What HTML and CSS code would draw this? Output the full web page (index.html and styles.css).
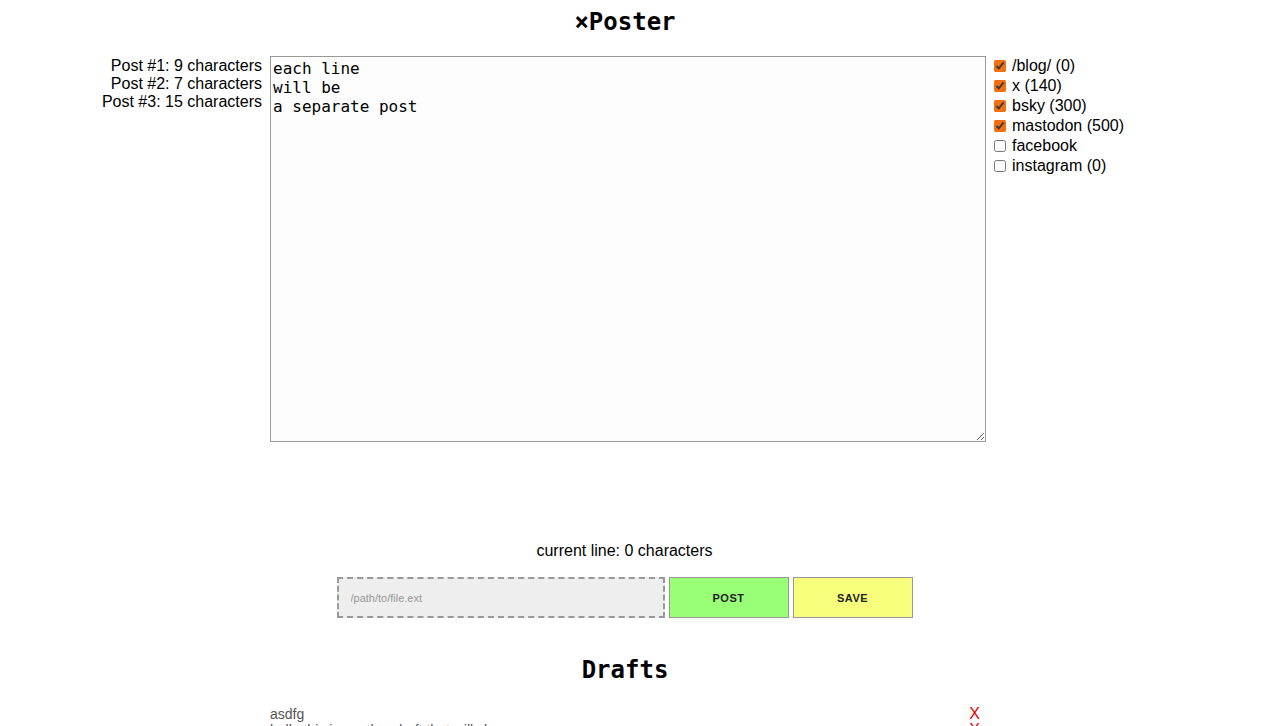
FILE: index.html
```html
<!DOCTYPE html>
<html>
<head>
<meta charset="utf-8">
<title>xPoster</title>
<link rel="stylesheet" href="styles.css">
</head>
<body>
<h1 class="title">×Poster</h1>
<div class="editor">
  <div class="counts">
    <div>Post #1: 9 characters</div>
    <div>Post #2: 7 characters</div>
    <div>Post #3: 15 characters</div>
  </div>
  <textarea class="compose">each line
will be
a separate post</textarea>
  <div class="targets">
    <label class="target"><input type="checkbox" checked> /blog/ (0)</label>
    <label class="target"><input type="checkbox" checked> x (140)</label>
    <label class="target"><input type="checkbox" checked> bsky (300)</label>
    <label class="target"><input type="checkbox" checked> mastodon (500)</label>
    <label class="target"><input type="checkbox"> facebook</label>
    <label class="target"><input type="checkbox"> instagram (0)</label>
  </div>
</div>
<div class="current">current line: 0 characters</div>
<div class="actions">
  <input class="file" type="text" placeholder="/path/to/file.ext">
  <button class="btn post">POST</button>
  <button class="btn save">SAVE</button>
</div>
<h2 class="title drafts-title">Drafts</h2>
<div class="drafts">
  <div class="draft"><span class="draft-text">asdfg</span><span class="del">X</span></div>
  <div class="draft"><span class="draft-text">hello this is another draft that will show</span><span class="del">X</span></div>
</div>
</body>
</html>
```
FILE: styles.css
```css
body {
  margin: 8px;
  font-family: "Liberation Sans", Arial, sans-serif;
  font-size: 16px;
  color: #000;
  background: #fff;
}
.title {
  font-family: "DejaVu Sans Mono", monospace;
  font-weight: bold;
  font-size: 24px;
  text-align: center;
  margin: 0;
  line-height: 28px;
  padding-right: 19px;
}
.editor {
  display: flex;
  gap: 8px;
  margin-top: 20px;
}
.counts {
  width: 254px;
  text-align: right;
  line-height: 18px;
  padding-top: 1px;
}
.compose {
  width: 716px;
  height: 386px;
  box-sizing: border-box;
  margin: 0;
  border: 1px solid #999;
  background: #fdfdfd;
  font-family: "DejaVu Sans Mono", monospace;
  font-size: 16px;
  line-height: 19px;
  padding: 2px 2px;
  resize: both;
  color: #000;
}
.targets {
  display: flex;
  flex-direction: column;
  line-height: 20px;
}
.target {
  display: flex;
  align-items: center;
  gap: 6px;
}
.target input {
  margin: 0;
  width: 12px;
  height: 12px;
  accent-color: #f36f10;
}
.current {
  text-align: center;
  margin-top: 100px;
  line-height: 18px;
  padding-right: 20px;
}
.actions {
  display: flex;
  justify-content: center;
  gap: 4px;
  margin-top: 17px;
  padding-right: 20px;
}
.file {
  width: 328px;
  height: 41px;
  box-sizing: border-box;
  border: 2px dashed #999;
  background: #eee;
  padding: 0 12px;
  font-family: "Liberation Sans", Arial, sans-serif;
  font-size: 11px;
  margin: 0;
}
.file::placeholder {
  color: #999;
}
.btn {
  width: 120px;
  height: 41px;
  box-sizing: border-box;
  border: 1px solid #999;
  font-family: "Liberation Sans", Arial, sans-serif;
  font-weight: bold;
  font-size: 11px;
  letter-spacing: 0.5px;
  color: #222;
  margin: 0;
}
.post {
  background: #99ff77;
}
.save {
  background: #f8ff7c;
}
.drafts-title {
  margin-top: 38px;
}
.drafts {
  width: 716px;
  margin: 22px 0 0 262px;
}
.draft {
  display: flex;
  justify-content: space-between;
  font-size: 14px;
  line-height: 16px;
  color: #555;
}
.del {
  color: #e00;
  font-size: 16px;
  padding-right: 6px;
}
```
